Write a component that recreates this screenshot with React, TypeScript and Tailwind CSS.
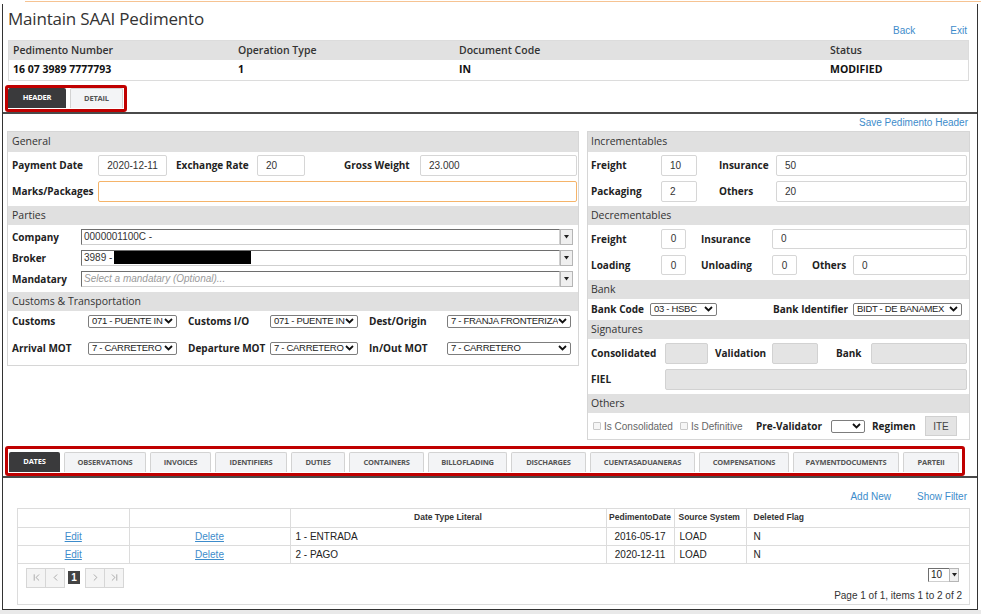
import { ChevronFirst, ChevronLast, ChevronLeft, ChevronRight } from 'lucide-react'
import type { ReactNode } from 'react'

const open = "font-['Open_Sans',sans-serif]"
const arial = "font-['Liberation_Sans',Arial,sans-serif]"

function Label({ w, children, className = '' }: { w: string; children: ReactNode; className?: string }) {
  return (
    <div className={`${w} shrink-0 whitespace-nowrap text-[10px] font-bold leading-none text-[#222] ${className}`}>
      {children}
    </div>
  )
}

function TextBox({
  w,
  value = '',
  align = 'left',
  variant = 'plain',
  h = 'h-[21px]',
}: {
  w: string
  value?: string
  align?: 'left' | 'center'
  variant?: 'plain' | 'orange' | 'gray'
  h?: string
}) {
  const look =
    variant === 'orange'
      ? 'border-[#f5b46a] bg-white'
      : variant === 'gray'
        ? 'border-[#d2d2d2] bg-[#e4e4e4]'
        : 'border-[#d6d6d6] bg-white'
  return (
    <div
      className={`${w} ${h} shrink-0 flex items-center rounded-[2px] border ${look} ${arial} text-[10px] text-[#333] ${
        align === 'center' ? 'justify-center' : 'pl-[8px]'
      }`}
    >
      {value}
    </div>
  )
}

function Chev() {
  return (
    <svg width="9" height="6" viewBox="0 0 9 6" className="shrink-0">
      <polyline points="1,1 4.5,4.5 8,1" fill="none" stroke="#111" strokeWidth="1.8" />
    </svg>
  )
}

function Select({ w, value = '' }: { w: string; value?: string }) {
  return (
    <div
      className={`${w} h-[13px] shrink-0 flex items-center rounded-[2px] border border-[#7d7d7d] bg-white pl-[3px] pr-[3px] ${arial} text-[9.5px] tracking-[-0.3px] leading-none text-[#222]`}
    >
      <span className="flex-1 overflow-hidden whitespace-nowrap">{value}</span>
      <Chev />
    </div>
  )
}

function Caret() {
  return (
    <svg width="5" height="4" viewBox="0 0 5 4">
      <polygon points="0,0 5,0 2.5,3.5" fill="#222" />
    </svg>
  )
}

function Combo({ children }: { children: ReactNode }) {
  return (
    <div className="w-[492px] h-[16px] shrink-0 flex">
      <div
        className={`flex-1 flex items-center overflow-hidden border-t border-l border-[#6e6e6e] border-r border-b border-r-[#cfcfcf] border-b-[#cfcfcf] bg-white pl-[2px] ${arial} text-[10px] text-[#333]`}
      >
        {children}
      </div>
      <div className="w-[13px] flex items-center justify-center border border-[#b5b5b5] bg-[#efefef]">
        <Caret />
      </div>
    </div>
  )
}

function SectionHead({ title, h = 'h-[20px]', pl = 'pl-[4px]' }: { title: string; h?: string; pl?: string }) {
  return (
    <div className={`${h} ${pl} flex items-center bg-[#e0e0e0] text-[10.5px] text-[#333]`}>{title}</div>
  )
}

function Check({ label, w }: { label: string; w: string }) {
  return (
    <div className={`${w} shrink-0 flex items-center gap-[3px]`}>
      <div className="w-[8px] h-[8px] rounded-[1px] border border-[#c9c9c9] bg-[#f6f6f6]" />
      <span className={`${arial} text-[10px] text-[#666]`}>{label}</span>
    </div>
  )
}

function Tab({ w, label, active = false }: { w: string; label: string; active?: boolean }) {
  return (
    <div
      className={`${w} h-[20px] shrink-0 flex items-center justify-center rounded-t-[2px] text-[7.5px] font-bold tracking-[-0.2px] ${
        active ? 'bg-[#3a3a3c] text-white' : 'border border-b-0 border-[#d3d3d3] bg-[#f3f4f6] text-[#555]'
      }`}
    >
      {label}
    </div>
  )
}

const bottomTabs: [string, string][] = [
  ['w-[51px]', 'DATES'],
  ['w-[82px]', 'OBSERVATIONS'],
  ['w-[61px]', 'INVOICES'],
  ['w-[72px]', 'IDENTIFIERS'],
  ['w-[54px]', 'DUTIES'],
  ['w-[75px]', 'CONTAINERS'],
  ['w-[79px]', 'BILLOFLADING'],
  ['w-[75px]', 'DISCHARGES'],
  ['w-[105px]', 'CUENTASADUANERAS'],
  ['w-[90px]', 'COMPENSATIONS'],
  ['w-[106px]', 'PAYMENTDOCUMENTS'],
  ['w-[56px]', 'PARTEII'],
]

const rows = [
  { literal: '1 - ENTRADA', date: '2016-05-17', source: 'LOAD', flag: 'N' },
  { literal: '2 - PAGO', date: '2020-12-11', source: 'LOAD', flag: 'N' },
]

function PagerBtn({ children, className = '' }: { children: ReactNode; className?: string }) {
  return (
    <div className={`w-[20px] h-[20px] flex items-center justify-center border border-[#d6d6d6] bg-[#f4f4f4] text-[#8a8a8a] ${className}`}>
      {children}
    </div>
  )
}

export default function App() {
  return (
    <div className={`w-[981px] h-[614px] overflow-hidden bg-white ${open} text-[#333]`}>
      <div className="mt-[1px] ml-[25px] h-px bg-[#f6c392]" />
      <div className="mt-[2px] ml-[2px] w-[976px] h-[606px] border-x border-b border-[#333] bg-white">
        {/* title + links */}
        <div className="h-[36px] flex justify-between px-[5px]">
          <h1 className="pt-[3px] text-[17px] leading-[24px] tracking-[-0.2px] text-[#333]">Maintain SAAI Pedimento</h1>
          <div className={`flex gap-[35px] pt-[19px] pr-[5px] ${arial} text-[10px] text-[#3d8ccb]`}>
            <span>Back</span>
            <span>Exit</span>
          </div>
        </div>

        {/* summary table */}
        <div className="ml-[5px] w-[961px] border border-[#dcdcdc] text-[10.5px]">
          <div className="h-[19px] flex items-center bg-[#e1e1e1] font-semibold text-[#333]">
            <div className="w-[225px] pl-[4px]">Pedimento Number</div>
            <div className="w-[221px] pl-[4px]">Operation Type</div>
            <div className="w-[371px] pl-[4px]">Document Code</div>
            <div className="pl-[4px]">Status</div>
          </div>
          <div className="h-[20px] flex items-center font-bold text-[#111]">
            <div className="w-[225px] pl-[4px]">16 07 3989 7777793</div>
            <div className="w-[221px] pl-[4px]">1</div>
            <div className="w-[371px] pl-[4px]">IN</div>
            <div className="pl-[4px]">MODIFIED</div>
          </div>
        </div>

        {/* header/detail tabs */}
        <div className="mt-[4px] border-b-2 border-[#4a4a4a]">
          <div className="ml-[2px] w-[122px] h-[27px] rounded-[3px] border-[3px] border-[#c00000] flex gap-[4px]">
            <Tab w="w-[58px]" label="HEADER" active />
            <Tab w="w-[53px]" label="DETAIL" />
          </div>
        </div>

        <div className={`h-[17px] flex items-center justify-end pr-[9px] ${arial} text-[10px] text-[#3d8ccb]`}>
          Save Pedimento Header
        </div>

        {/* panels */}
        <div className="flex items-start gap-[8px] pl-[4px]">
          {/* left panel */}
          <div className="w-[572px] border border-[#d6d6d6]">
            <SectionHead title="General" />
            <div className="pb-[2px]">
              <div className="h-[26px] flex items-center pl-[4px]">
                <Label w="w-[86px]">Payment Date</Label>
                <TextBox w="w-[69px]" value="2020-12-11" align="center" />
                <Label w="w-[81px]" className="ml-[9px]">Exchange Rate</Label>
                <TextBox w="w-[48px]" value="20" />
                <Label w="w-[76px]" className="ml-[39px]">Gross Weight</Label>
                <TextBox w="w-[157px]" value="23.000" />
              </div>
              <div className="h-[26px] flex items-center pl-[4px]">
                <Label w="w-[86px]">Marks/Packages</Label>
                <TextBox w="w-[479px]" variant="orange" />
              </div>
            </div>
            <SectionHead title="Parties" h="h-[19px]" />
            <div className="pt-[1px] pb-[3px]">
              <div className="h-[21px] flex items-center pl-[4px]">
                <Label w="w-[69px]">Company</Label>
                <Combo>0000001100C -</Combo>
              </div>
              <div className="h-[21px] flex items-center pl-[4px]">
                <Label w="w-[69px]">Broker</Label>
                <Combo>
                  <span className="whitespace-nowrap">3989 -</span>
                  <span className="ml-[2px] w-[137px] h-[13px] bg-black" />
                </Combo>
              </div>
              <div className="h-[21px] flex items-center pl-[4px]">
                <Label w="w-[69px]">Mandatary</Label>
                <Combo>
                  <span className="italic text-[#9a9a9a]">Select a mandatary (Optional)...</span>
                </Combo>
              </div>
            </div>
            <SectionHead title="Customs & Transportation" h="h-[19px]" />
            <div className="pb-[7px]">
              <div className="h-[20px] flex items-center pl-[4px]">
                <Label w="w-[76px]">Customs</Label>
                <Select w="w-[89px]" value="071 - PUENTE IN" />
                <Label w="w-[82px]" className="ml-[11px]">Customs I/O</Label>
                <Select w="w-[88px]" value="071 - PUENTE IN" />
                <Label w="w-[78px]" className="ml-[11px]">Dest/Origin</Label>
                <Select w="w-[124px]" value="7 - FRANJA FRONTERIZA" />
              </div>
              <div className="mt-[7px] h-[20px] flex items-center pl-[4px]">
                <Label w="w-[76px]">Arrival MOT</Label>
                <Select w="w-[89px]" value="7 - CARRETERO" />
                <Label w="w-[82px]" className="ml-[11px]">Departure MOT</Label>
                <Select w="w-[88px]" value="7 - CARRETERO" />
                <Label w="w-[78px]" className="ml-[11px]">In/Out MOT</Label>
                <Select w="w-[124px]" value="7 - CARRETERO" />
              </div>
            </div>
          </div>

          {/* right panel */}
          <div className="w-[383px] border border-[#d6d6d6]">
            <SectionHead title="Incrementables" pl="pl-[3px]" />
            <div className="pb-[2px]">
              <div className="h-[26px] flex items-center pl-[3px]">
                <Label w="w-[70px]">Freight</Label>
                <TextBox w="w-[36px]" value="10" />
                <Label w="w-[57px]" className="ml-[22px]">Insurance</Label>
                <TextBox w="w-[191px]" value="50" />
              </div>
              <div className="h-[26px] flex items-center pl-[3px]">
                <Label w="w-[70px]">Packaging</Label>
                <TextBox w="w-[36px]" value="2" />
                <Label w="w-[57px]" className="ml-[22px]">Others</Label>
                <TextBox w="w-[191px]" value="20" />
              </div>
            </div>
            <SectionHead title="Decrementables" h="h-[19px]" pl="pl-[3px]" />
            <div className="pb-[2px]">
              <div className="h-[27px] flex items-center pl-[3px]">
                <Label w="w-[70px]">Freight</Label>
                <TextBox w="w-[25px]" h="h-[20px]" value="0" align="center" />
                <Label w="w-[71px]" className="ml-[15px]">Insurance</Label>
                <TextBox w="w-[195px]" h="h-[20px]" value="0" />
              </div>
              <div className="h-[26px] flex items-center pl-[3px]">
                <Label w="w-[70px]">Loading</Label>
                <TextBox w="w-[25px]" h="h-[20px]" value="0" align="center" />
                <Label w="w-[71px]" className="ml-[15px]">Unloading</Label>
                <TextBox w="w-[25px]" h="h-[20px]" value="0" align="center" />
                <Label w="w-[41px]" className="ml-[15px]">Others</Label>
                <TextBox w="w-[114px]" h="h-[20px]" value="0" />
              </div>
            </div>
            <SectionHead title="Bank" h="h-[19px]" pl="pl-[3px]" />
            <div className="h-[20px] mb-[1px] flex items-center pl-[3px]">
              <Label w="w-[59px]">Bank Code</Label>
              <Select w="w-[67px]" value="03 - HSBC" />
              <Label w="w-[80px]" className="ml-[56px]">Bank Identifier</Label>
              <Select w="w-[109px]" value="BIDT - DE BANAMEX" />
            </div>
            <SectionHead title="Signatures" h="h-[19px]" pl="pl-[3px]" />
            <div className="pt-[1px] pb-[2px]">
              <div className="h-[26px] flex items-center pl-[3px]">
                <Label w="w-[74px]">Consolidated</Label>
                <TextBox w="w-[43px]" variant="gray" />
                <Label w="w-[57px]" className="ml-[7px]">Validation</Label>
                <TextBox w="w-[46px]" variant="gray" />
                <Label w="w-[35px]" className="ml-[18px]">Bank</Label>
                <TextBox w="w-[96px]" variant="gray" />
              </div>
              <div className="h-[26px] flex items-center pl-[3px]">
                <Label w="w-[74px]">FIEL</Label>
                <TextBox w="w-[302px]" variant="gray" />
              </div>
            </div>
            <SectionHead title="Others" h="h-[19px]" pl="pl-[3px]" />
            <div className="h-[26px] flex items-center pl-[5px]">
              <Check w="w-[87px]" label="Is Consolidated" />
              <Check w="w-[76px]" label="Is Definitive" />
              <Label w="w-[75px]">Pre-Validator</Label>
              <Select w="w-[34px]" />
              <Label w="w-[53px]" className="ml-[7px]">Regimen</Label>
              <div className={`w-[32px] h-[20px] flex items-center justify-center border border-[#d0d0d0] bg-[#e4e4e4] ${arial} text-[10px] text-[#444]`}>
                ITE
              </div>
            </div>
          </div>
        </div>

        {/* detail tabs */}
        <div className="mt-[6px] border-b-2 border-[#4a4a4a]">
          <div className="ml-[2px] w-[960px] h-[30px] rounded-[3px] border-[3px] border-[#c00000] flex items-start gap-[4px] pt-[3px] pl-[1px]">
            {bottomTabs.map(([w, label], i) => (
              <Tab key={label} w={w} label={label} active={i === 0} />
            ))}
          </div>
        </div>

        <div className={`h-[30px] flex items-end justify-end gap-[26px] pb-[4px] pr-[10px] ${arial} text-[10px] text-[#3d8ccb]`}>
          <span>Add New</span>
          <span>Show Filter</span>
        </div>

        {/* grid */}
        <div className={`ml-[14px] w-[953px] h-[97px] border border-[#dcdcdc] ${arial}`}>
          <table className="w-full table-fixed border-collapse text-[10px] text-[#222]">
            <colgroup>
              <col className="w-[111px]" />
              <col className="w-[161px]" />
              <col className="w-[316px]" />
              <col className="w-[68px]" />
              <col className="w-[72px]" />
              <col />
            </colgroup>
            <thead>
              <tr className="h-[18px] text-[8.5px] font-bold text-[#333]">
                <th className="border-r border-b border-[#dcdcdc]" />
                <th className="border-r border-b border-[#dcdcdc]" />
                <th className="border-r border-b border-[#dcdcdc] text-center">Date Type Literal</th>
                <th className="border-r border-b border-[#dcdcdc] text-center">PedimentoDate</th>
                <th className="border-r border-b border-[#dcdcdc] text-left pl-[4px]">Source System</th>
                <th className="border-b border-[#dcdcdc] text-left pl-[7px]">Deleted Flag</th>
              </tr>
            </thead>
            <tbody>
              {rows.map(r => (
                <tr key={r.literal} className="h-[18px]">
                  <td className="border-r border-b border-[#dcdcdc] text-center text-[#3d8ccb] underline">Edit</td>
                  <td className="border-r border-b border-[#dcdcdc] text-center text-[#3d8ccb] underline">Delete</td>
                  <td className="border-r border-b border-[#dcdcdc] pl-[5px]">{r.literal}</td>
                  <td className="border-r border-b border-[#dcdcdc] text-center">{r.date}</td>
                  <td className="border-r border-b border-[#dcdcdc] pl-[5px]">{r.source}</td>
                  <td className="border-b border-[#dcdcdc] pl-[7px]">{r.flag}</td>
                </tr>
              ))}
            </tbody>
          </table>
          <div className="flex items-start justify-between pl-[8px] pr-[7px] pt-[4px]">
            <div className="flex items-center">
              <PagerBtn><ChevronFirst size={11} strokeWidth={1.5} /></PagerBtn>
              <PagerBtn className="-ml-px"><ChevronLeft size={11} strokeWidth={1.5} /></PagerBtn>
              <div className="ml-[3px] w-[12px] h-[13px] flex items-center justify-center bg-[#444] text-[10px] font-bold text-white">1</div>
              <PagerBtn className="ml-[5px]"><ChevronRight size={11} strokeWidth={1.5} /></PagerBtn>
              <PagerBtn className="-ml-px"><ChevronLast size={11} strokeWidth={1.5} /></PagerBtn>
            </div>
            <div className="flex flex-col items-end">
              <div className="mr-[3px] flex h-[14px]">
                <div className="w-[21px] flex items-center pl-[2px] border-t border-l border-[#6e6e6e] border-b border-b-[#cfcfcf] bg-white text-[10px] text-[#222]">10</div>
                <div className="w-[10px] flex items-center justify-center border border-[#b5b5b5] bg-[#efefef]">
                  <Caret />
                </div>
              </div>
              <div className="mt-[6px] text-[10px] text-[#333]">Page 1 of 1, items 1 to 2 of 2</div>
            </div>
          </div>
        </div>
      </div>
      <div className="h-[5px] bg-[#e9e9e9]" />
    </div>
  )
}
